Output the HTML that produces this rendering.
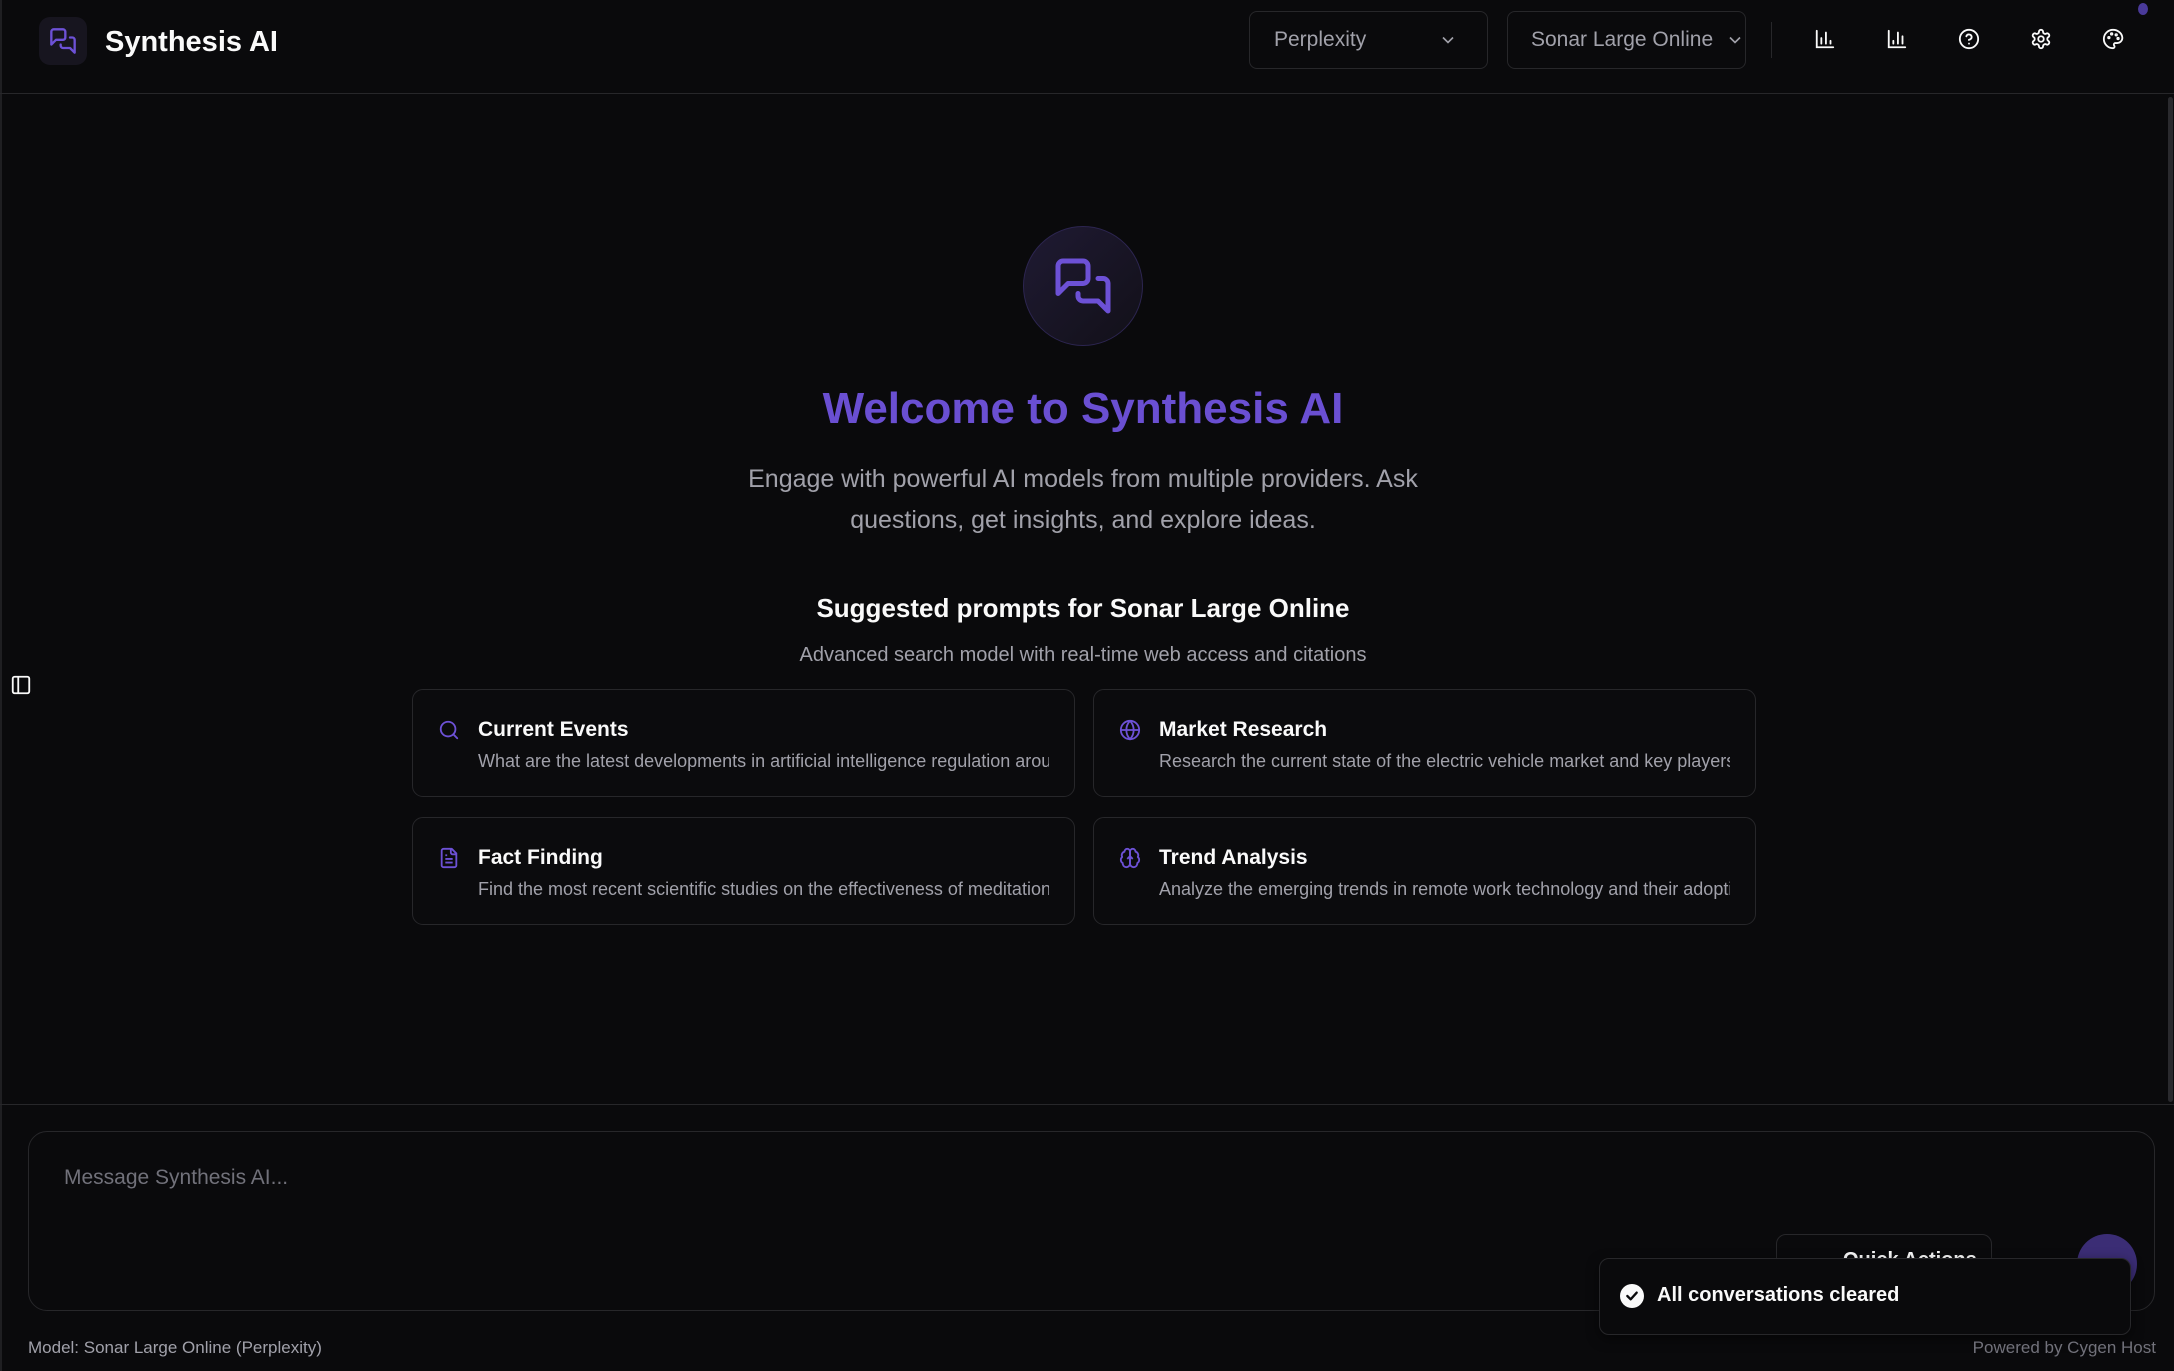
<!DOCTYPE html>
<html><head><meta charset="utf-8"><style>
*{box-sizing:border-box;margin:0;padding:0}
body{width:2174px;height:1371px;background:#0a0a0c;font-family:"Liberation Sans",sans-serif;color:#fafafa;position:relative;overflow:hidden}
.abs{position:absolute}
.sel{position:absolute;top:11px;height:58px;border:1px solid #27272a;border-radius:8px;color:#a1a1aa;font-size:21px;line-height:56px;padding-left:24px;overflow:hidden;white-space:nowrap}
.card{position:absolute;width:663px;height:108px;border:1px solid #27272a;border-radius:11px;background:#0b0b0d;overflow:hidden}
.card .t{position:absolute;left:65px;top:28px;font-size:21px;font-weight:bold;color:#fafafa}
.card .d{position:absolute;left:65px;top:61px;right:25px;font-size:18px;color:#a1a1aa;white-space:nowrap;overflow:hidden}
.card svg{position:absolute;left:25px;top:29px}
.ic{position:absolute;top:28px}
</style></head><body>
<div class="abs" style="left:0;top:0;width:2px;height:1371px;background:#1f1f22"></div>
<div class="abs" style="left:0;top:93px;width:2174px;height:1px;background:#27272a"></div>
<div class="abs" style="left:39px;top:17px;width:48px;height:48px;border-radius:11px;background:#17151f"></div>
<svg class="abs" style="left:49px;top:27px" width="28" height="28" viewBox="0 0 24 24" fill="none" stroke="#6d51d6" stroke-width="2" stroke-linecap="round" stroke-linejoin="round"><path d="M14 9a2 2 0 0 1-2 2H6l-4 4V4a2 2 0 0 1 2-2h8a2 2 0 0 1 2 2z"/><path d="M18 9h2a2 2 0 0 1 2 2v11l-4-4h-6a2 2 0 0 1-2-2v-1"/></svg>
<div class="abs" style="left:105px;top:26px;font-size:29px;font-weight:bold;color:#fafafa">Synthesis AI</div>

<div class="sel" style="left:1249px;width:239px">Perplexity<svg class="abs" style="left:188px;top:18px" width="20" height="20" viewBox="0 0 24 24" fill="none" stroke="#a1a1aa" stroke-width="2"><path d="M6 9l6 6 6-6"/></svg></div>
<div class="sel" style="left:1507px;width:239px;padding-left:23px">Sonar Large Online<svg class="abs" style="left:217px;top:18px" width="20" height="20" viewBox="0 0 24 24" fill="none" stroke="#a1a1aa" stroke-width="2"><path d="M6 9l6 6 6-6"/></svg></div>
<div class="abs" style="left:1771px;top:22px;width:1px;height:36px;background:#27272a"></div>
<svg class="ic" style="left:1814px" width="22" height="22" viewBox="0 0 24 24" fill="none" stroke="#fafafa" stroke-width="2" stroke-linecap="round"><path d="M3 3v18h18M8 17V11M13 17V5M18 17v-3"/></svg>
<svg class="ic" style="left:1886px" width="22" height="22" viewBox="0 0 24 24" fill="none" stroke="#fafafa" stroke-width="2" stroke-linecap="round"><path d="M3 3v18h18M8 17v-3M13 17V5M18 17V9"/></svg>
<svg class="ic" style="left:1958px" width="22" height="22" viewBox="0 0 24 24" fill="none" stroke="#fafafa" stroke-width="2" stroke-linecap="round"><circle cx="12" cy="12" r="10"/><path d="M9.1 9a3 3 0 0 1 5.8 1c0 2-3 3-3 3M12 17h.01"/></svg>
<svg class="ic" style="left:2030px" width="22" height="22" viewBox="0 0 24 24" fill="none" stroke="#fafafa" stroke-width="2" stroke-linejoin="round"><path d="M12.22 2h-.44a2 2 0 0 0-2 2v.18a2 2 0 0 1-1 1.73l-.43.25a2 2 0 0 1-2 0l-.15-.08a2 2 0 0 0-2.730.73l-.22.38a2 2 0 0 0 .73 2.73l.15.1a2 2 0 0 1 1 1.72v.51a2 2 0 0 1-1 1.74l-.15.09a2 2 0 0 0-.73 2.73l.22.38a2 2 0 0 0 2.73.73l.15-.08a2 2 0 0 1 2 0l.43.25a2 2 0 0 1 1 1.73V20a2 2 0 0 0 2 2h.44a2 2 0 0 0 2-2v-.18a2 2 0 0 1 1-1.73l.43-.25a2 2 0 0 1 2 0l.15.08a2 2 0 0 0 2.73-.73l.22-.39a2 2 0 0 0-.73-2.73l-.15-.08a2 2 0 0 1-1-1.74v-.5a2 2 0 0 1 1-1.74l.15-.09a2 2 0 0 0 .73-2.73l-.22-.38a2 2 0 0 0-2.73-.73l-.15.08a2 2 0 0 1-2 0l-.43-.25a2 2 0 0 1-1-1.73V4a2 2 0 0 0-2-2z"/><circle cx="12" cy="12" r="3"/></svg>
<svg class="ic" style="left:2102px" width="22" height="22" viewBox="0 0 24 24" fill="none" stroke="#fafafa" stroke-width="2"><path d="M12 2C6.5 2 2 6.5 2 12s4.5 10 10 10c.9 0 1.7-.8 1.7-1.7 0-.4-.2-.8-.4-1.1-.3-.3-.4-.7-.4-1.1 0-.9.8-1.700 1.7-1.7h2c3.1 0 5.6-2.5 5.6-5.6C22 6 17.5 2 12 2z"/><circle cx="7.5" cy="10.5" r=".8"/><circle cx="10.5" cy="6.5" r=".8"/><circle cx="15.5" cy="7.5" r=".8"/><circle cx="17.5" cy="11.5" r=".8"/></svg>
<div class="abs" style="left:2138px;top:3px;width:10px;height:12px;border-radius:50%;background:#4a3a9a"></div>
<div class="abs" style="left:2168px;top:97px;width:5px;height:1005px;border-radius:3px;background:#2a2a2e"></div>

<svg class="abs" style="left:10px;top:674px" width="22" height="22" viewBox="0 0 24 24" fill="none" stroke="#fafafa" stroke-width="2"><rect x="3" y="3" width="18" height="18" rx="2"/><path d="M9 3v18"/></svg>

<div class="abs" style="left:1023px;top:226px;width:120px;height:120px;border-radius:50%;background:linear-gradient(135deg,#1f1a33,#121018);border:1px solid #2c2550"></div>
<svg class="abs" style="left:1053px;top:256px" width="60" height="60" viewBox="0 0 24 24" fill="none" stroke="#6d51d6" stroke-width="2" stroke-linecap="round" stroke-linejoin="round"><path d="M14 9a2 2 0 0 1-2 2H6l-4 4V4a2 2 0 0 1 2-2h8a2 2 0 0 1 2 2z"/><path d="M18 9h2a2 2 0 0 1 2 2v11l-4-4h-6a2 2 0 0 1-2-2v-1"/></svg>
<div class="abs" style="left:0;width:2166px;top:384px;text-align:center;font-size:44px;font-weight:bold;color:#6a4fd2">Welcome to Synthesis AI</div>
<div class="abs" style="left:713px;width:740px;top:459px;text-align:center;font-size:25px;line-height:41px;color:#a1a1aa">Engage with powerful AI models from multiple providers. Ask questions, get insights, and explore ideas.</div>
<div class="abs" style="left:0;width:2166px;top:593px;text-align:center;font-size:26px;font-weight:bold;color:#fafafa">Suggested prompts for Sonar Large Online</div>
<div class="abs" style="left:0;width:2166px;top:644px;text-align:center;font-size:20px;color:#a1a1aa">Advanced search model with real-time web access and citations</div>

<div class="card" style="left:412px;top:689px"><svg width="22" height="22" viewBox="0 0 24 24" fill="none" stroke="#6d51d6" stroke-width="2" stroke-linecap="round"><circle cx="11" cy="11" r="8"/><path d="M21 21l-4.3-4.3"/></svg><div class="t">Current Events</div><div class="d">What are the latest developments in artificial intelligence regulation around the world?</div></div>
<div class="card" style="left:1093px;top:689px"><svg width="22" height="22" viewBox="0 0 24 24" fill="none" stroke="#6d51d6" stroke-width="2"><circle cx="12" cy="12" r="10"/><path d="M12 2a14.5 14.5 0 0 0 0 20 14.5 14.5 0 0 0 0-20M2 12h20"/></svg><div class="t">Market Research</div><div class="d">Research the current state of the electric vehicle market and key players</div></div>
<div class="card" style="left:412px;top:817px"><svg width="22" height="22" viewBox="0 0 24 24" fill="none" stroke="#6d51d6" stroke-width="2" stroke-linejoin="round"><path d="M15 2H6a2 2 0 0 0-2 2v16a2 2 0 0 0 2 2h12a2 2 0 0 0 2-2V7z"/><path d="M14 2v4a2 2 0 0 0 2 2h4M10 9H8M16 13H8M16 17H8"/></svg><div class="t">Fact Finding</div><div class="d">Find the most recent scientific studies on the effectiveness of meditation</div></div>
<div class="card" style="left:1093px;top:817px"><svg width="22" height="22" viewBox="0 0 24 24" fill="none" stroke="#6d51d6" stroke-width="2" stroke-linejoin="round"><path d="M12 5a3 3 0 1 0-5.997.125 4 4 0 0 0-2.526 5.77 4 4 0 0 0 .556 6.588A4 4 0 1 0 12 18Z"/><path d="M12 5a3 3 0 1 1 5.997.125 4 4 0 0 1 2.526 5.77 4 4 0 0 1-.556 6.588A4 4 0 1 1 12 18Z"/><path d="M12 5v13M9 13l3-3 3 3"/></svg><div class="t">Trend Analysis</div><div class="d">Analyze the emerging trends in remote work technology and their adoption</div></div>

<div class="abs" style="left:0;top:1104px;width:2174px;height:1px;background:#27272a"></div>
<div class="abs" style="left:28px;top:1131px;width:2127px;height:180px;border:1px solid #27272a;border-radius:19px"></div>
<div class="abs" style="left:64px;top:1166px;font-size:21px;color:#71717a">Message Synthesis AI...</div>
<div class="abs" style="left:1776px;top:1234px;width:216px;height:60px;border:1px solid #27272a;border-radius:10px;font-size:20px;font-weight:bold;padding:14px 0 0 66px;color:#fafafa">Quick Actions</div>
<div class="abs" style="left:2077px;top:1234px;width:60px;height:60px;border-radius:50%;background:#3b2d75"></div>
<div class="abs" style="left:1599px;top:1258px;width:532px;height:77px;border:1px solid #27272a;border-radius:10px;background:#0a0a0c;box-shadow:0 4px 12px rgba(0,0,0,.5)"></div>
<div class="abs" style="left:1620px;top:1284px;width:24px;height:24px;border-radius:50%;background:#fafafa"></div>
<svg class="abs" style="left:1624px;top:1288px" width="16" height="16" viewBox="0 0 24 24" fill="none" stroke="#0a0a0c" stroke-width="3.5" stroke-linecap="round" stroke-linejoin="round"><path d="M5 12l5 5 9-10"/></svg>
<div class="abs" style="left:1657px;top:1284px;font-size:20px;font-weight:bold;color:#fafafa">All conversations cleared</div>
<div class="abs" style="left:28px;top:1338px;font-size:17px;color:#a1a1aa">Model: Sonar Large Online (Perplexity)</div>
<div class="abs" style="right:18px;top:1338px;font-size:17px;color:#71717a">Powered by Cygen Host</div>
</body></html>
